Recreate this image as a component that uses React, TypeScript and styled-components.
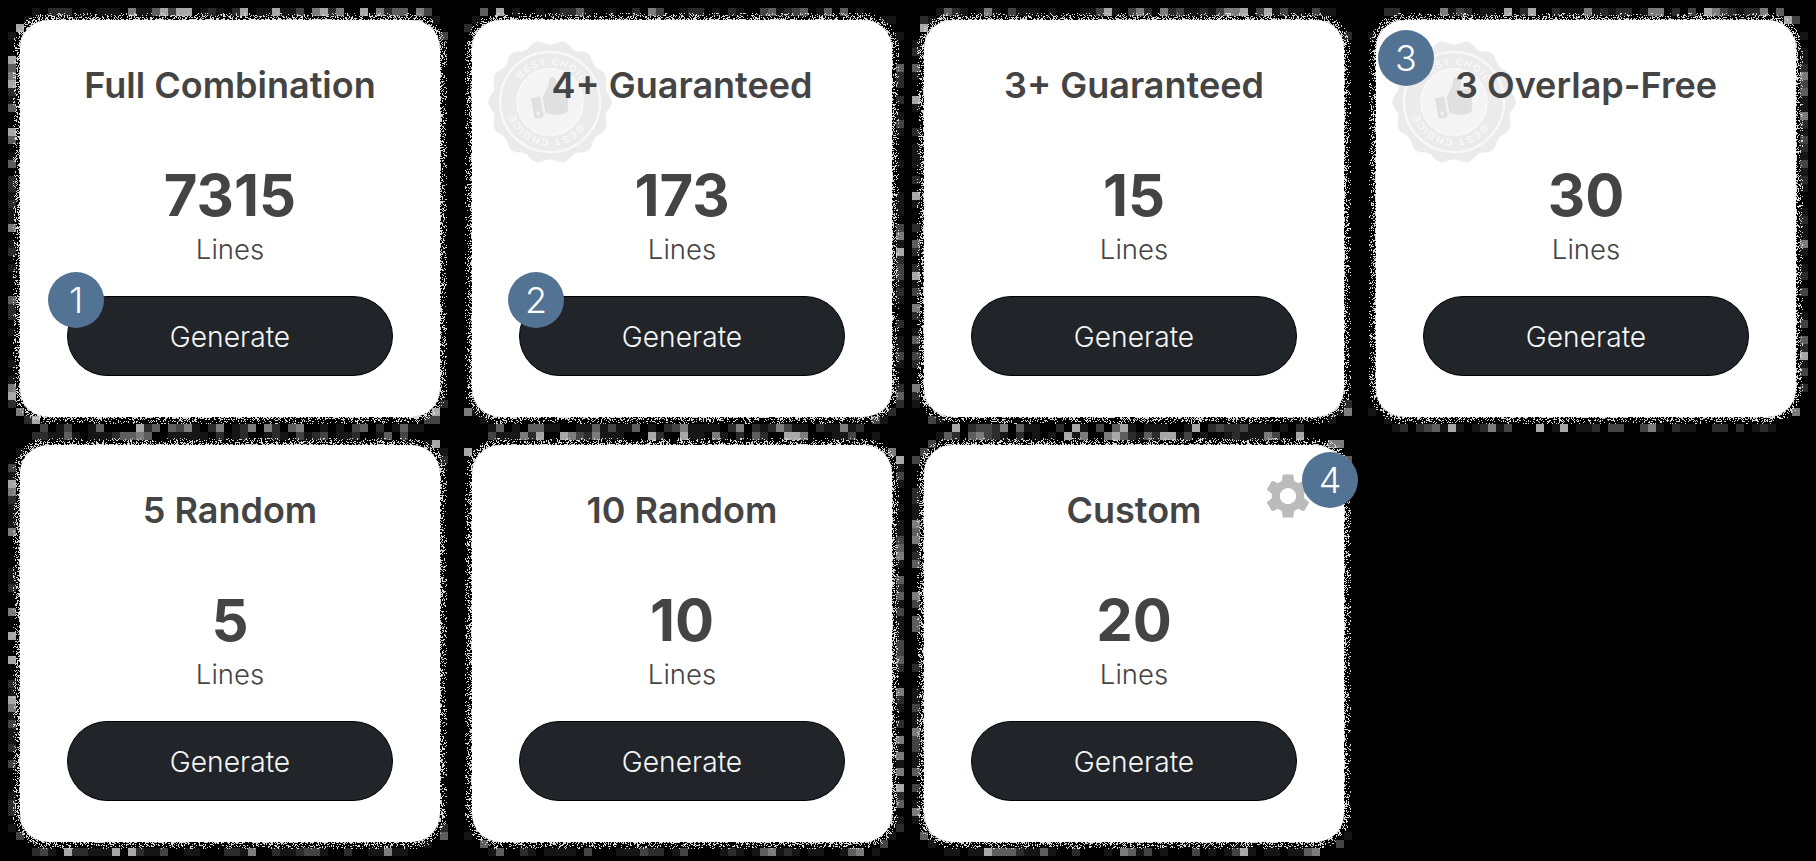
import React, { useMemo } from "react";
import styled, { createGlobalStyle } from "styled-components";
import { MdSettings } from "react-icons/md";
import { FaThumbsUp } from "react-icons/fa";

const CARD_W = 420;
const CARD_H = 397;
const PITCH_X = 452;
const PITCH_Y = 425;
const ORIGIN = 20;
const RADIUS = 28;
const BLEED = 16;

const Global = createGlobalStyle`
  html, body { margin: 0; padding: 0; background: #000; }
  body { width: 1816px; height: 861px; overflow: hidden; font-family: Inter, "Liberation Sans", sans-serif; }
`;

const Board = styled.main`
  display: grid;
  grid-template-columns: repeat(4, ${CARD_W}px);
  grid-auto-rows: ${CARD_H}px;
  column-gap: ${PITCH_X - CARD_W}px;
  row-gap: ${PITCH_Y - CARD_H}px;
  padding: ${ORIGIN}px;
`;

const Card = styled.section`
  position: relative;
  display: flex;
  flex-direction: column;
  align-items: center;
  padding: 42px 47px 41px;
  background: #fff;
  border-radius: ${RADIUS}px;
  color: #444;
`;

const Fringe = styled.svg`
  position: absolute;
  left: -${BLEED}px;
  top: -${BLEED}px;
  pointer-events: none;
  shape-rendering: crispEdges;
`;

const Title = styled.h2`
  position: relative;
  margin: 0;
  font-size: 36px;
  line-height: 46px;
  font-weight: 600;
  white-space: nowrap;
`;

const Count = styled.div`
  position: relative;
  margin-top: 53px;
  font-size: 58px;
  line-height: 68px;
  font-weight: 700;
`;

const Unit = styled.div`
  margin-top: 1px;
  font-size: 27.5px;
  line-height: 38px;
  font-weight: 350;
`;

const GenerateButton = styled.button`
  width: 326px;
  height: 80px;
  margin-top: 28px;
  padding: 1px 0 0;
  flex: none;
  box-sizing: border-box;
  border: 1px solid #000;
  border-radius: 40px;
  background: #212529;
  color: #f6f6f6;
  font: 350 28.2px Inter, "Liberation Sans", sans-serif;
`;

const Badge = styled.span<{ $left: number; $top: number }>`
  position: absolute;
  left: ${(p) => p.$left}px;
  top: ${(p) => p.$top}px;
  display: flex;
  align-items: center;
  justify-content: center;
  width: 56px;
  height: 56px;
  border-radius: 50%;
  background: #527394;
  color: #fff;
  font-size: 36px;
  font-weight: 300;
`;

const Seal = styled.svg`
  position: absolute;
  left: 16px;
  top: 20px;
`;

const Gear = styled(MdSettings)`
  position: absolute;
  left: 337px;
  top: 24px;
  color: #bbb;
`;

type Rng = () => number;
const makeRng = (seed: number): Rng => {
  let s = seed >>> 0;
  return () => {
    s = (s + 0x6d2b79f5) >>> 0;
    let t = Math.imul(s ^ (s >>> 15), 1 | s);
    t = (t + Math.imul(t ^ (t >>> 7), 61 | t)) ^ t;
    return ((t ^ (t >>> 14)) >>> 0) / 4294967296;
  };
};

const edgeDistance = (x: number, y: number) => {
  const qx = Math.abs(x - CARD_W / 2) - (CARD_W / 2 - RADIUS);
  const qy = Math.abs(y - CARD_H / 2) - (CARD_H / 2 - RADIUS);
  return Math.hypot(Math.max(qx, 0), Math.max(qy, 0)) + Math.min(Math.max(qx, qy), 0) - RADIUS;
};

const BLOCK_GREYS = ["#161616", "#2c2c2c", "#444", "#5e5e5e", "#7c7c7c", "#a8a8a8"];

function CardFringe({ col, row }: { col: number; row: number }) {
  const size = { w: CARD_W + BLEED * 2, h: CARD_H + BLEED * 2 };
  const { speckle, blocks } = useMemo(() => {
    const rng = makeRng(col * 131 + row * 977 + 7);
    const ax = ORIGIN + col * PITCH_X;
    const ay = ORIGIN + row * PITCH_Y;
    const groups: string[] = BLOCK_GREYS.map(() => "");
    for (let by = Math.floor((ay - BLEED) / 8) * 8; by < ay + CARD_H + BLEED; by += 8) {
      for (let bx = Math.floor((ax - BLEED) / 8) * 8; bx < ax + CARD_W + BLEED; bx += 8) {
        const d = edgeDistance(bx + 4 - ax, by + 4 - ay);
        if (d > 5 && d < 12 && rng() < 0.7) {
          const r = rng();
          const idx = Math.floor(r * r * BLOCK_GREYS.length);
          groups[idx] += `M${bx - ax + BLEED} ${by - ay + BLEED}h8v8h-8z`;
        }
      }
    }
    let dots = "";
    for (let y = -9; y < CARD_H + 9; y++) {
      for (let x = -9; x < CARD_W + 9; x++) {
        const d = edgeDistance(x + 0.5, y + 0.5);
        if (d > -0.5 && d < 7) {
          const chance = d < 1 ? 0.6 : d < 3.5 ? 0.34 : d < 5.5 ? 0.26 : 0.14;
          if (rng() < chance) dots += `M${x + BLEED} ${y + BLEED}h1v1h-1z`;
        }
      }
    }
    return { speckle: dots, blocks: groups };
  }, [col, row]);
  return (
    <Fringe width={size.w} height={size.h} viewBox={`0 0 ${size.w} ${size.h}`} aria-hidden>
      {blocks.map((d, i) => (d ? <path key={i} d={d} fill={BLOCK_GREYS[i]} /> : null))}
      <path d={speckle} fill="#dcdcdc" />
    </Fringe>
  );
}

const scallopPath = (() => {
  const lobes = 14;
  const pts: string[] = [];
  for (let i = 0; i <= 280; i++) {
    const a = (i / 280) * Math.PI * 2;
    const r = 59.5 + 2.2 * Math.cos(a * lobes);
    pts.push(`${(62 + r * Math.cos(a)).toFixed(1)} ${(62 + r * Math.sin(a)).toFixed(1)}`);
  }
  return `M${pts.join("L")}Z`;
})();

function BestChoiceSeal({ id }: { id: string }) {
  return (
    <Seal width="124" height="124" viewBox="0 0 124 124" aria-hidden>
      <path d={scallopPath} fill="#ebebeb" />
      <circle cx="62" cy="62" r="50" fill="none" stroke="#f8f8f8" strokeWidth="2.5" />
      <circle cx="62" cy="62" r="33" fill="#f4f4f4" stroke="#f8f8f8" strokeWidth="2" />
      <g transform="rotate(10 62 62)">
        <path id={`${id}-ring`} d="M25 62a37 37 0 0 1 74 0a37 37 0 0 1 -74 0" fill="none" />
        <text fontFamily="Liberation Sans, sans-serif" fontWeight="700" fontSize="10" letterSpacing="1.2" fill="#f8f8f8" textAnchor="middle">
          <textPath href={`#${id}-ring`} startOffset="25%">BEST CHOICE</textPath>
        </text>
        <text fontFamily="Liberation Sans, sans-serif" fontWeight="700" fontSize="10" letterSpacing="1.2" fill="#f8f8f8" textAnchor="middle">
          <textPath href={`#${id}-ring`} startOffset="75%">BEST CHOICE</textPath>
        </text>
      </g>
      <g transform="rotate(-10 62 58)" color="#e0e0e0">
        <FaThumbsUp x={43} y={38} size={38} />
      </g>
    </Seal>
  );
}

type Plan = {
  title: string;
  count: number;
  seal?: boolean;
  gear?: boolean;
  badge?: { n: number; left: number; top: number };
};

const plans: Plan[] = [
  { title: "Full Combination", count: 7315, badge: { n: 1, left: 28, top: 252 } },
  { title: "4+ Guaranteed", count: 173, seal: true, badge: { n: 2, left: 36, top: 252 } },
  { title: "3+ Guaranteed", count: 15 },
  { title: "3 Overlap-Free", count: 30, seal: true, badge: { n: 3, left: 2, top: 10 } },
  { title: "5 Random", count: 5 },
  { title: "10 Random", count: 10 },
  { title: "Custom", count: 20, gear: true, badge: { n: 4, left: 378, top: 7 } },
];

export default function App() {
  return (
    <>
      <Global />
      <Board>
        {plans.map((plan, i) => (
          <Card key={plan.title}>
            <CardFringe col={i % 4} row={Math.floor(i / 4)} />
            {plan.seal && <BestChoiceSeal id={`seal-${i}`} />}
            <Title>{plan.title}</Title>
            <Count>{plan.count}</Count>
            <Unit>Lines</Unit>
            <GenerateButton type="button">Generate</GenerateButton>
            {plan.gear && <Gear size={54} />}
            {plan.badge && (
              <Badge $left={plan.badge.left} $top={plan.badge.top}>
                {plan.badge.n}
              </Badge>
            )}
          </Card>
        ))}
      </Board>
    </>
  );
}
